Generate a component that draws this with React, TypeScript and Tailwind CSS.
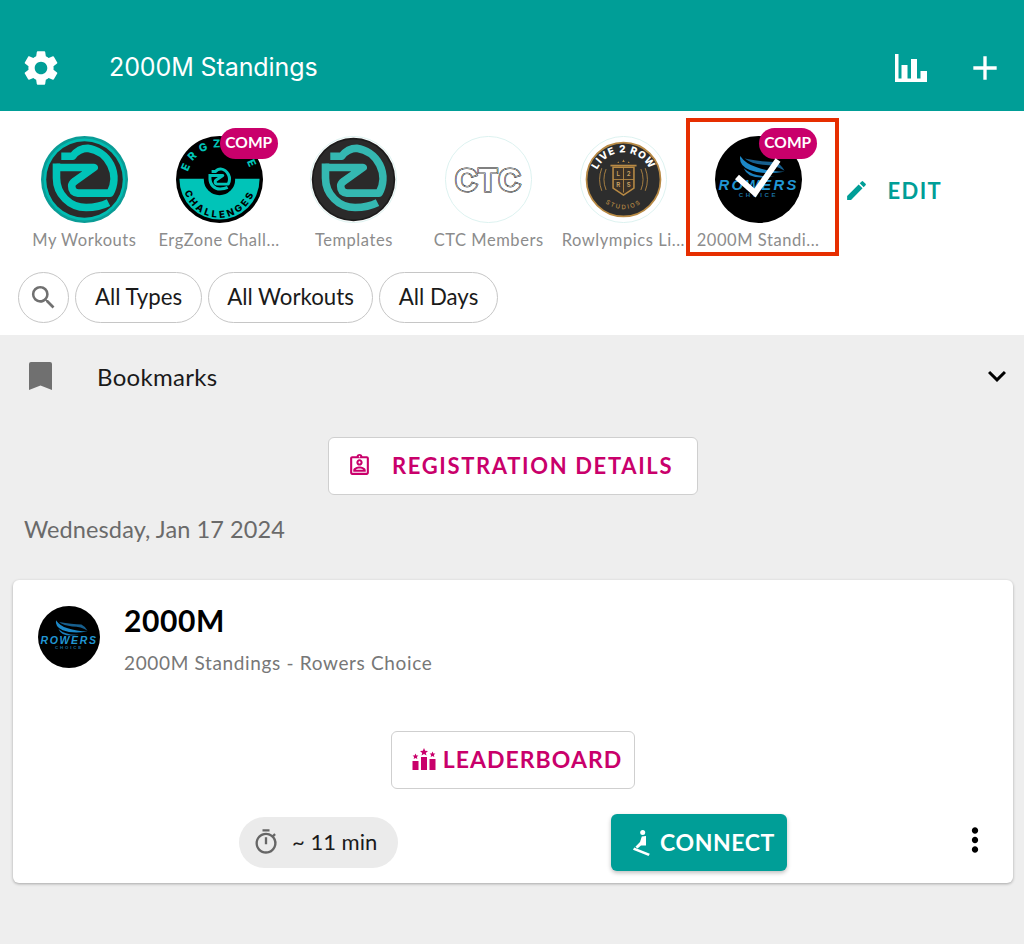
import React from "react";
import { MdSettings, MdAdd, MdSearch, MdEdit, MdExpandMore, MdOutlineTimer, MdMoreVert, MdOutlineAssignmentInd } from "react-icons/md";

const ZMark = ({ color = "#00c4b8", sw = 9.5 }: { color?: string; sw?: number }) => (
  <g fill="none" stroke={color} strokeWidth={sw} strokeLinejoin="round" transform="translate(4 4) scale(0.92)">
    <path d="M21 21 H35 Q43 11 54 11 A38 38 0 0 1 82 67 H42 Q34 66 34 58 Q34 55 38 52 L62 35 H15" />
    <path d="M15 30 V48 A37 37 0 0 0 52 85 Q68 85 80 79" />
  </g>
);

const ZLogo = ({ dim = false }: { dim?: boolean }) => (
  <svg viewBox="0 0 100 100" className="w-[87px] h-[87px]">
    {dim ? (
      <>
        <circle cx="50" cy="50" r="49.5" fill="#fff" stroke="#d8f0ee" strokeWidth="1" />
        <circle cx="50" cy="50" r="48" fill="#1c1c1c" />
        <circle cx="50" cy="50" r="46" fill="#2b2a2a" />
        <ZMark color="#34b8b1" />
      </>
    ) : (
      <>
        <circle cx="50" cy="50" r="50" fill="#0a9c96" />
        <circle cx="50" cy="50" r="47" fill="#00bdb2" />
        <circle cx="50" cy="50" r="44" fill="#2b2a2a" />
        <ZMark />
      </>
    )}
  </svg>
);

const ErgLogo = () => (
  <svg viewBox="0 0 100 100" className="w-[87px] h-[87px]">
    <defs>
      <clipPath id="ergLower"><rect x="0" y="49" width="100" height="51" /></clipPath>
      <path id="ergTop" d="M13 50 A37 37 0 0 1 87 50" />
      <path id="ergBottom" d="M8 52 A42 42 0 0 0 92 52" />
    </defs>
    <circle cx="50" cy="50" r="50" fill="#000" />
    <circle cx="50" cy="50" r="46" fill="#00c4b8" clipPath="url(#ergLower)" />
    <text fontFamily="Inter, sans-serif" fontWeight="800" fontSize="12.5" letterSpacing="5.5" fill="#00c4b8">
      <textPath href="#ergTop" startOffset="50%" textAnchor="middle">ERGZONE</textPath>
    </text>
    <text fontFamily="Inter, sans-serif" fontWeight="800" fontSize="11" letterSpacing="3.2" fill="#000">
      <textPath href="#ergBottom" startOffset="50%" textAnchor="middle">CHALLENGES</textPath>
    </text>
    <circle cx="50" cy="50" r="18" fill="#000" />
    <g transform="translate(33 33) scale(0.34)">
      <ZMark sw={11} />
    </g>
  </svg>
);

const CtcLogo = () => {
  const t = { x: 50, y: 63, textAnchor: "middle" as const, fontFamily: "Liberation Sans, sans-serif", fontWeight: 700, fontSize: 35, letterSpacing: 1.5 };
  return (
    <svg viewBox="0 0 100 100" className="w-[87px] h-[87px]">
      <circle cx="50" cy="50" r="49.5" fill="#fff" stroke="#d8f0ee" strokeWidth="1" />
      <text {...t} fill="#111" stroke="#111" strokeWidth="3.4">CTC</text>
      <text {...t} fill="#fff" stroke="#fff" strokeWidth="2.2" aria-hidden="true">CTC</text>
      <text {...t} fill="#111" stroke="#111" strokeWidth="1.1" aria-hidden="true">CTC</text>
      <text {...t} fill="#fff" aria-hidden="true" stroke="#fff" strokeWidth="0">CTC</text>
    </svg>
  );
};

const Live2Logo = () => (
  <svg viewBox="0 0 100 100" className="w-[87px] h-[87px]">
    <defs>
      <path id="l2rTop" d="M17 52 A33 33 0 0 1 83 52" />
      <path id="l2rBottom" d="M16 50 A34 34 0 0 0 84 50" />
    </defs>
    <circle cx="50" cy="50" r="49.5" fill="#fff" stroke="#d8f0ee" strokeWidth="1" />
    <circle cx="50" cy="50" r="42.5" fill="#2d2d2d" stroke="#b88a45" strokeWidth="2" />
    <text fontFamily="Inter, sans-serif" fontWeight="800" fontSize="11.5" letterSpacing="1" fill="#fff">
      <textPath href="#l2rTop" startOffset="50%" textAnchor="middle">LIVE 2 ROW</textPath>
    </text>
    <text fontFamily="Inter, sans-serif" fontWeight="500" fontSize="7" letterSpacing="2" fill="#b88a45">
      <textPath href="#l2rBottom" startOffset="50%" textAnchor="middle">STUDIOS</textPath>
    </text>
    <path d="M38 36 H62 V60 L50 68 L38 60 Z" fill="#3a3128" stroke="#b88a45" strokeWidth="1.8" />
    <path d="M50 36 V65 M38 50 H62" stroke="#b88a45" strokeWidth="1" />
    <path d="M35 34 H65" stroke="#b88a45" strokeWidth="2" />
    <path d="M44 29 l1 2 l-2 0 Z M50 27 l1.5 3 l-3 0 Z M56 29 l1 2 l-2 0 Z" fill="#b88a45" />
    <g fontFamily="Inter, sans-serif" fontSize="7" fontWeight="600" fill="#c9a265" textAnchor="middle">
      <text x="44" y="46">L</text><text x="56" y="46">2</text>
      <text x="44" y="59">R</text><text x="56" y="59">S</text>
    </g>
    <path d="M30 38 Q25 50 30 62 M25 37 Q20 50 25 63 M70 38 Q75 50 70 62 M75 37 Q80 50 75 63" fill="none" stroke="#b88a45" strokeWidth="1" />
  </svg>
);

const RowersLogo = ({ size = "w-[87px] h-[87px]" }: { size?: string }) => (
  <svg viewBox="0 0 100 100" className={size}>
    <circle cx="50" cy="50" r="50" fill="#000" />
    <path d="M29 23 Q27 34 40 39 Q55 45 80 41 Q62 41 48 36 Q35 32 29 23 Z" fill="#1c88c7" />
    <path d="M33 37 Q45 48 68 46 Q50 50 40 45 Q35 42 33 37 Z" fill="#1a7fbd" />
    <path d="M34 26 Q55 30 70 30 Q76 33 80 40 Q70 33 55 33 Q42 32 34 26 Z" fill="#175f8e" />
    <text x="50" y="62" textAnchor="middle" fontFamily="Liberation Sans, sans-serif" fontWeight="700" fontStyle="italic" fontSize="17" letterSpacing="2.6" fill="#2196d3">ROWERS</text>
    <text x="50" y="70" textAnchor="middle" fontFamily="Liberation Sans, sans-serif" fontWeight="700" fontSize="7" letterSpacing="3" fill="#1a6f9f">CHOICE</text>
  </svg>
);

const Comp = () => (
  <span className="absolute left-[68px] top-[17px] h-[31px] w-[58px] pb-[2px] rounded-full bg-[#c9006b] text-white text-[15.5px] font-bold flex items-center justify-center font-['Lato',sans-serif]">
    COMP
  </span>
);

const Story = ({ label, children, comp, selected }: { label: string; children: React.ReactNode; comp?: boolean; selected?: boolean }) => (
  <div className="relative w-[134.75px] shrink-0 flex flex-col items-center pt-[25px]">
    {children}
    {comp && <Comp />}
    {selected && (
      <svg viewBox="0 0 87 87" className="absolute left-[24px] top-[25px] w-[87px] h-[87px]">
        <path d="M22 41 L40 57 L63 24" fill="none" stroke="#fff" strokeWidth="6" />
      </svg>
    )}
    <span className="mt-[7px] text-[16.5px] leading-[20px] text-[#8c8c8c] tracking-[0.55px] whitespace-nowrap">{label}</span>
    {selected && <div className="absolute left-[-5px] top-[7px] w-[153px] h-[138px] border-[4px] border-[#e62e00]" />}
  </div>
);

const Chip = ({ children, w }: { children: React.ReactNode; w: string }) => (
  <div className={`${w} h-[51px] pb-[2px] rounded-full border border-[#c6c6c6] flex items-center justify-center text-[22.25px] text-[#1a1a1a]`}>{children}</div>
);

export default function App() {
  return (
    <div className="min-h-[944px] bg-[#eeeeee] font-['Lato',sans-serif]">
      <header className="h-[111px] bg-[#009e97] flex items-center text-white pt-[24px]">
        <MdSettings className="ml-[20px] text-[42px] shrink-0" />
        <h1 className="ml-[47px] text-[25px] font-['Inter',sans-serif] font-normal tracking-[-0.1px]">2000M Standings</h1>
        <svg viewBox="0 0 32 28" className="ml-auto w-[32px] h-[28px]" fill="#fff">
          <path d="M0 0 H3.5 V24.5 H32 V28 H0 Z" />
          <rect x="6.5" y="11" width="6" height="14" />
          <rect x="16" y="5" width="6" height="20" />
          <rect x="25.5" y="17" width="6.5" height="8" />
        </svg>
        <MdAdd className="ml-[38px] mr-[19px] text-[40px] shrink-0" />
      </header>

      <section className="bg-white h-[224px]">
        <div className="h-[161px] pl-[17px] flex items-start">
          <Story label="My Workouts"><ZLogo /></Story>
          <Story label="ErgZone Chall..." comp><ErgLogo /></Story>
          <Story label="Templates"><ZLogo dim /></Story>
          <Story label="CTC Members"><CtcLogo /></Story>
          <Story label="Rowlympics Li..."><Live2Logo /></Story>
          <Story label="2000M Standi..." comp selected><RowersLogo /></Story>
          <div className="ml-[18px] mt-[63px] flex items-center text-[#009e97]">
            <MdEdit className="text-[25px]" />
            <span className="ml-[19px] text-[22px] font-bold tracking-[1.4px]">EDIT</span>
          </div>
        </div>
        <div className="pl-[18px] flex gap-[6px]">
          <div className="w-[51px] h-[51px] rounded-full border border-[#c6c6c6] flex items-center justify-center">
            <MdSearch className="text-[31px] text-[#707070]" />
          </div>
          <Chip w="w-[127px]">All Types</Chip>
          <Chip w="w-[165px]">All Workouts</Chip>
          <Chip w="w-[119px]">All Days</Chip>
        </div>
      </section>

      <div className="h-[82px] flex items-center pl-[29px] pr-[9px]">
        <svg viewBox="0 0 23 28" className="w-[23px] h-[28px] shrink-0" fill="#707070">
          <path d="M2 0 H21 Q23 0 23 2 V28 L11.5 23.5 L0 28 V2 Q0 0 2 0 Z" />
        </svg>
        <span className="ml-[45px] text-[24px] tracking-[0.3px] text-[#1a1a1a] mt-[2px]">Bookmarks</span>
        <MdExpandMore className="ml-auto text-[36px] text-black" />
      </div>

      <div className="mt-[20px] flex justify-center pl-[2px]">
        <button className="w-[370px] h-[58px] pb-[2px] pr-[6px] bg-white rounded-[6px] border border-[#cfcfcf] flex items-center justify-center gap-[20px] text-[#c9006b]">
          <MdOutlineAssignmentInd className="text-[25px]" />
          <span className="text-[22px] font-bold tracking-[1.65px]">REGISTRATION DETAILS</span>
        </button>
      </div>

      <div className="mt-[20px] h-[30px] pl-[24px] flex items-center text-[23.5px] tracking-[0.1px] text-[#6a6a6a]">Wednesday, Jan 17 2024</div>

      <article className="mt-[35px] ml-[13px] mr-[11px] h-[303px] bg-white rounded-[6px] shadow-[0_1px_3px_rgba(0,0,0,0.3)] flex flex-col">
        <div className="flex pl-[25px] pt-[25px] h-[151px]">
          <RowersLogo size="w-[62px] h-[62px] mt-[1px]" />
          <div className="ml-[24px]">
            <div className="text-[30px] leading-[30px] font-bold tracking-[0.6px] text-black">2000M</div>
            <div className="mt-[16px] text-[19px] leading-[24px] text-[#777777] tracking-[0.65px]">2000M Standings - Rowers Choice</div>
          </div>
        </div>
        <div className="flex justify-center">
          <button className="w-[244px] h-[58px] pl-[8px] pb-[2px] bg-white rounded-[6px] border border-[#cfcfcf] flex items-center justify-center gap-[7px] text-[#c9006b]">
            <svg viewBox="0 0 24 22" className="w-[24px] h-[22px]" fill="#c9006b">
              <rect x="0.5" y="13" width="6" height="9" />
              <rect x="9" y="9" width="6" height="13" />
              <rect x="17.5" y="11" width="6" height="11" />
              <path d="M12 0 L13.2 2.8 L16 3 L13.8 4.9 L14.5 7.6 L12 6.1 L9.5 7.6 L10.2 4.9 L8 3 L10.8 2.8 Z" />
              <path d="M3.5 5.5 L4.4 7.4 L6.4 7.6 L4.9 9 L5.3 11 L3.5 10 L1.7 11 L2.1 9 L0.6 7.6 L2.6 7.4 Z" />
              <path d="M20.5 3.5 L21.4 5.4 L23.4 5.6 L21.9 7 L22.3 9 L20.5 8 L18.7 9 L19.1 7 L17.6 5.6 L19.6 5.4 Z" />
            </svg>
            <span className="text-[23px] font-bold tracking-[1.05px]">LEADERBOARD</span>
          </button>
        </div>
        <div className="mt-[25px] flex items-center pl-[226px]">
          <div className="w-[159px] h-[51px] pb-[2px] rounded-full bg-[#ebebeb] flex items-center pl-[13px]">
            <MdOutlineTimer className="text-[28px] text-[#666666]" />
            <span className="ml-[12px] text-[22px] text-[#1a1a1a]">~ 11 min</span>
          </div>
          <button className="ml-[213px] w-[176px] h-[57px] pl-[10px] rounded-[6px] bg-[#009e97] shadow-[0_2px_4px_rgba(0,0,0,0.25)] flex items-center justify-center gap-[9px] text-white">
            <svg viewBox="0 0 18 26" className="w-[18px] h-[26px]" fill="#fff">
              <circle cx="9.7" cy="2.6" r="2.5" />
              <path d="M8.8 6.5 L13 6 V15.5 H8 L4.5 18.5 L2.4 16.8 L7 12 Z" />
              <path d="M1.2 17.5 L16.8 23.8 L15.6 26 L0 19.8 Z" />
            </svg>
            <span className="text-[23px] font-bold tracking-[0.6px]">CONNECT</span>
          </button>
          <MdMoreVert className="ml-[169px] -mt-[5px] text-[38px] text-black" />
        </div>
      </article>
    </div>
  );
}
